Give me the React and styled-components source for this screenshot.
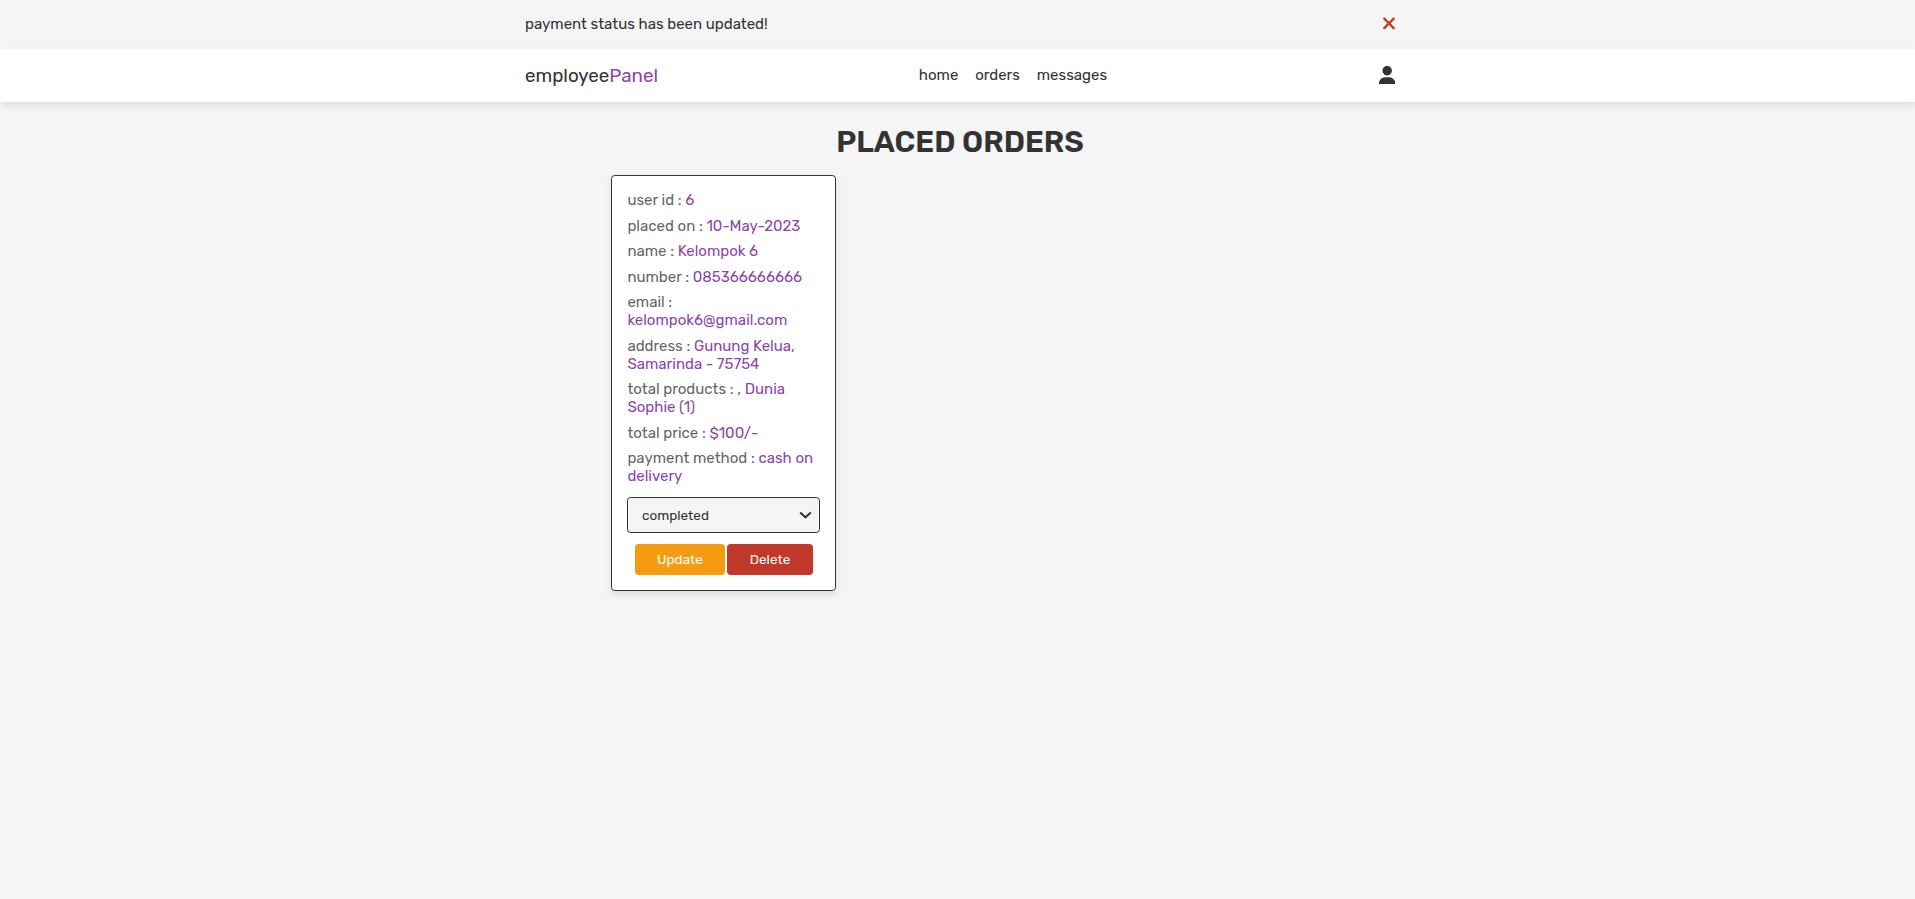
import React from 'react';
import styled, { createGlobalStyle } from 'styled-components';

const GlobalStyle = createGlobalStyle`
  *, *::before, *::after { box-sizing: border-box; margin: 0; padding: 0; }
  body {
    background: #f5f5f5;
    color: #333;
    font-family: Rubik, Roboto, sans-serif;
    font-size: 15px;
    line-height: 18px;
    overflow: hidden;
  }
`;

const Page = styled.div`
  min-height: 899px;
`;

const Inner = styled.div`
  width: 875px;
  margin: 0 auto;
  padding-left: 5px;
  display: flex;
  align-items: center;
  justify-content: space-between;
`;

const Message = styled(Inner)`
  height: 49px;
  padding-bottom: 1px;
`;

const CloseIcon = styled.svg`
  width: 12px;
  height: 18.75px;
  margin-bottom: 1px;
  fill: #c0392b;
  cursor: pointer;
`;

const Header = styled.header`
  background: #fff;
  box-shadow: 0 3.75px 7.5px rgba(0, 0, 0, 0.1);
`;

const HeaderInner = styled(Inner)`
  height: 53px;
  padding-bottom: 1px;
`;

const Logo = styled.a`
  font-size: 18.75px;
  line-height: 22px;
  padding-top: 1px;
`;

const Accent = styled.span`
  color: #8e44ad;
`;

const Nav = styled.nav`
  display: flex;
  gap: 16.8px;
  margin-right: 10.6px;
`;

const UserIcon = styled.svg`
  width: 16.4px;
  height: 18.75px;
  fill: #333;
`;

const Orders = styled.section`
  padding: 22.5px 0 0 5px;
`;

const Title = styled.h1`
  font-size: 30px;
  font-weight: 600;
  line-height: 35.5px;
  text-align: center;
  margin-bottom: 15px;
`;

const Grid = styled.div`
  width: 698px;
  margin: 0 auto;
  display: grid;
  grid-template-columns: repeat(3, 225px);
  justify-content: space-between;
`;

const Card = styled.article`
  height: 416px;
  border: 1px solid #333;
  border-radius: 3.75px;
  background: #fff;
  box-shadow: 0 3.75px 7.5px rgba(0, 0, 0, 0.1);
  padding: 15px;
`;

const Field = styled.p`
  color: #666;
  padding: 0 0 7.5px 0.4px;
`;

const Select = styled.div`
  display: flex;
  align-items: center;
  justify-content: space-between;
  height: 36px;
  margin: 4.5px 0 11px;
  padding: 0 7.5px 0 14px;
  border: 1px solid #333;
  border-radius: 3.75px;
  background: #f5f5f5;
  font-size: 13.5px;
`;

const Chevron = styled.svg`
  width: 13px;
  height: 8px;
  fill: none;
  stroke: #333;
  stroke-width: 2.1;
`;

const Actions = styled.div`
  display: flex;
  justify-content: center;
  gap: 2px;
  padding-left: 1px;
`;

const Button = styled.button`
  width: ${({ $width }) => $width}px;
  height: 31px;
  padding-bottom: 2px;
  border: 0;
  border-radius: 3.75px;
  background: ${({ $color }) => $color};
  color: #fff;
  font: 400 13.5px/16px Rubik, Roboto, sans-serif;
  cursor: pointer;
`;

const links = ['home', 'orders', 'messages'];

const fields = [
  ['user id', '6'],
  ['placed on', '10-May-2023'],
  ['name', 'Kelompok 6'],
  ['number', '085366666666'],
  ['email', 'kelompok6@gmail.com'],
  ['address', 'Gunung Kelua, Samarinda - 75754'],
  ['total products', ', Dunia Sophie (1)'],
  ['total price', '$100/-'],
  ['payment method', 'cash on delivery'],
];

export default function App() {
  return (
    <Page>
      <GlobalStyle />
      <Message>
        <span>payment status has been updated!</span>
        <CloseIcon viewBox="0 0 320 512">
          <path d="M310.6 361.4c12.5 12.5 12.5 32.75 0 45.25C304.4 412.9 296.2 416 288 416s-16.38-3.125-22.62-9.375L160 301.3L54.63 406.6C48.38 412.9 40.19 416 32 416S15.63 412.9 9.375 406.6c-12.5-12.5-12.5-32.75 0-45.25l105.4-105.4L9.375 150.6c-12.5-12.5-12.5-32.75 0-45.25s32.75-12.5 45.25 0L160 210.8l105.4-105.4c12.5-12.5 32.75-12.5 45.25 0s12.5 32.75 0 45.25l-105.4 105.4L310.6 361.4z" />
        </CloseIcon>
      </Message>
      <Header>
        <HeaderInner>
          <Logo>employee<Accent>Panel</Accent></Logo>
          <Nav>
            {links.map((name) => <a key={name}>{name}</a>)}
          </Nav>
          <UserIcon viewBox="0 0 448 512">
            <path d="M224 256c70.7 0 128-57.31 128-128S294.7 0 224 0S96 57.31 96 128S153.3 256 224 256zM274.7 304H173.3C77.61 304 0 381.6 0 477.3C0 496.5 15.52 512 34.66 512h378.7C432.5 512 448 496.5 448 477.3C448 381.6 370.4 304 274.7 304z" />
          </UserIcon>
        </HeaderInner>
      </Header>
      <Orders>
        <Title>PLACED ORDERS</Title>
        <Grid>
          <Card>
            {fields.map(([label, value]) => (
              <Field key={label}>{label} : <Accent>{value}</Accent></Field>
            ))}
            <Select>
              completed
              <Chevron viewBox="0 0 13 8"><path d="M1.2 1.5L6.5 6.3L11.8 1.5" /></Chevron>
            </Select>
            <Actions>
              <Button $color="#f39c12" $width={90}>Update</Button>
              <Button $color="#c0392b" $width={86}>Delete</Button>
            </Actions>
          </Card>
        </Grid>
      </Orders>
    </Page>
  );
}
